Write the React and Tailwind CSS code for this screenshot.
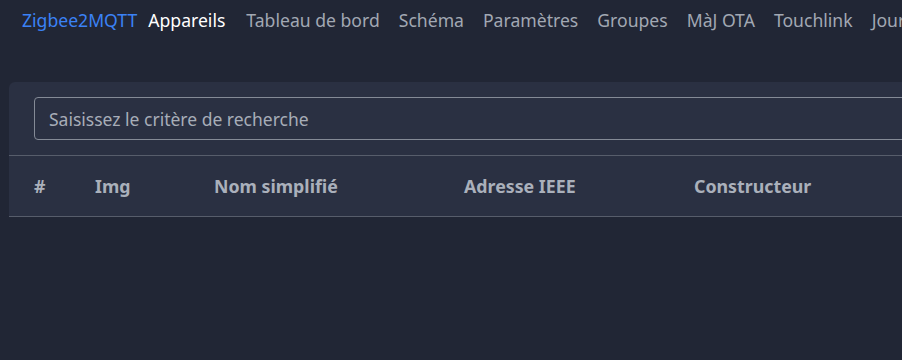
const NAV = ['Appareils', 'Tableau de bord', 'Schéma', 'Paramètres', 'Groupes', 'MàJ OTA', 'Touchlink', 'Journaux'];

const COLS = [
  { label: '#', w: 'w-[61px]' },
  { label: 'Img', w: 'w-[119px]' },
  { label: 'Nom simplifié', w: 'w-[250px]' },
  { label: 'Adresse IEEE', w: 'w-[230px]' },
  { label: 'Constructeur', w: 'w-[220px]' },
];

export default function App() {
  return (
    <div className="h-[360px] w-[902px] overflow-hidden bg-[#212635] font-['Noto_Sans',sans-serif]">
      {/* top navigation */}
      <nav className="flex h-[41px] items-center whitespace-nowrap pl-[22px] text-[17.6px]">
        <span className="mr-[11px] text-[#3b82f6]">Zigbee2MQTT</span>
        {NAV.map((item, i) => (
          <span
            key={item}
            className={i === 0 ? 'mr-[21px] text-white' : 'mr-[19px] text-[#a2a8b3]'}
          >
            {item}
          </span>
        ))}
      </nav>

      <div className="ml-[9px] mt-[41px] w-[1000px] rounded-tl-[6px] bg-[#2a3042]">
        <div className="pl-[25px] pt-[15px] pb-[15px]">
          <input
            readOnly
            placeholder="Saisissez le critère de recherche"
            className="h-[43px] w-[960px] rounded-[4px] border border-[#848a96] bg-transparent px-[14px] text-[17.5px] text-[#a7adb8] outline-none placeholder:text-[#a7adb8]"
          />
        </div>
        <div className="flex h-[62px] items-center border-y border-[#575d6b] pl-[25px] text-[17.8px] font-bold text-[#aab0bb]">
          {COLS.map((c) => (
            <div key={c.label} className={c.w}>
              {c.label}
            </div>
          ))}
        </div>
      </div>
    </div>
  );
}
